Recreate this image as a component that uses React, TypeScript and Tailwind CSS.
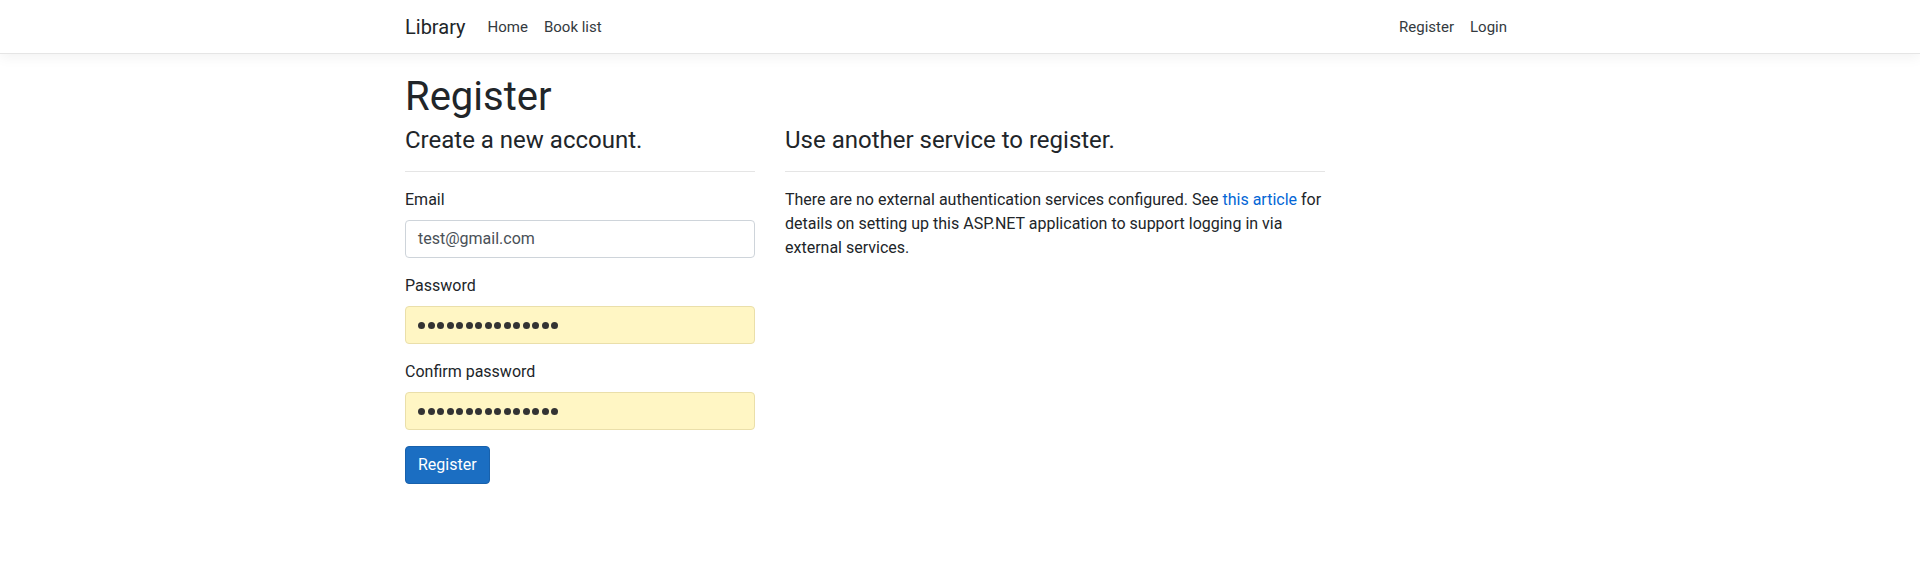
import React from "react";

const font = { fontFamily: '"Segoe UI", Roboto, "Helvetica Neue", Arial, sans-serif' };

function Dots() {
  return (
    <div className="flex items-center gap-[2.5px]">
      {Array.from({ length: 15 }).map((_, i) => (
        <span key={i} className="block w-[7px] h-[7px] rounded-full bg-[#333333]" />
      ))}
    </div>
  );
}

export default function App() {
  return (
    <div className="min-h-[564px] bg-white text-[#212529] text-[16px] leading-6" style={font}>
      <header className="h-[54px] bg-white border-b border-[#e5e5e5] shadow-[0_4px_12px_rgba(0,0,0,0.05)] mb-4">
        <nav className="w-[1140px] mx-auto px-[15px] h-full flex items-center">
          <a className="text-[20px] leading-[30px] text-[#212529] mr-[14px]">Library</a>
          <ul className="flex items-center">
            <li><a className="block px-2 text-[15px] text-[#343a40]">Home</a></li>
            <li><a className="block px-2 text-[15px] text-[#343a40]">Book list</a></li>
          </ul>
          <ul className="flex items-center ml-auto">
            <li><a className="block px-2 text-[15px] text-[#343a40]">Register</a></li>
            <li><a className="block px-2 text-[15px] text-[#343a40]">Login</a></li>
          </ul>
        </nav>
      </header>
      <main className="w-[1140px] mx-auto px-[15px] pt-[3px] pb-4">
        <h1 className="text-[40px] leading-[48px] font-normal mb-[5px]">Register</h1>
        <div className="flex -mx-[15px]">
          <div className="w-[380px] px-[15px]">
            <h4 className="text-[24px] leading-[29px] font-normal mb-4">Create a new account.</h4>
            <hr className="border-0 border-t border-[#e5e5e5] mb-4" />
            <div className="mb-4">
              <label className="block mb-2">Email</label>
              <div className="h-[38px] border border-[#ced4da] rounded-[4px] px-3 flex items-center text-[#495057] bg-white">
                test@gmail.com
              </div>
            </div>
            <div className="mb-4">
              <label className="block mb-2">Password</label>
              <div className="h-[38px] border border-[#eadfaa] rounded-[4px] px-3 flex items-center bg-[#fff6c4]">
                <Dots />
              </div>
            </div>
            <div className="mb-4">
              <label className="block mb-2">Confirm password</label>
              <div className="h-[38px] border border-[#eadfaa] rounded-[4px] px-3 flex items-center bg-[#fff6c4]">
                <Dots />
              </div>
            </div>
            <button className="h-[38px] px-3 rounded-[4px] bg-[#1b6ec2] border border-[#1861ac] text-white text-[16px]">
              Register
            </button>
          </div>
          <div className="w-[570px] px-[15px]">
            <h4 className="text-[24px] leading-[29px] font-normal mb-4">Use another service to register.</h4>
            <hr className="border-0 border-t border-[#e5e5e5] mb-4" />
            <p>
              There are no external authentication services configured. See{" "}
              <a className="text-[#0366d6]">this article</a> for details on setting up this ASP.NET
              application to support logging in via external services.
            </p>
          </div>
        </div>
      </main>
    </div>
  );
}
